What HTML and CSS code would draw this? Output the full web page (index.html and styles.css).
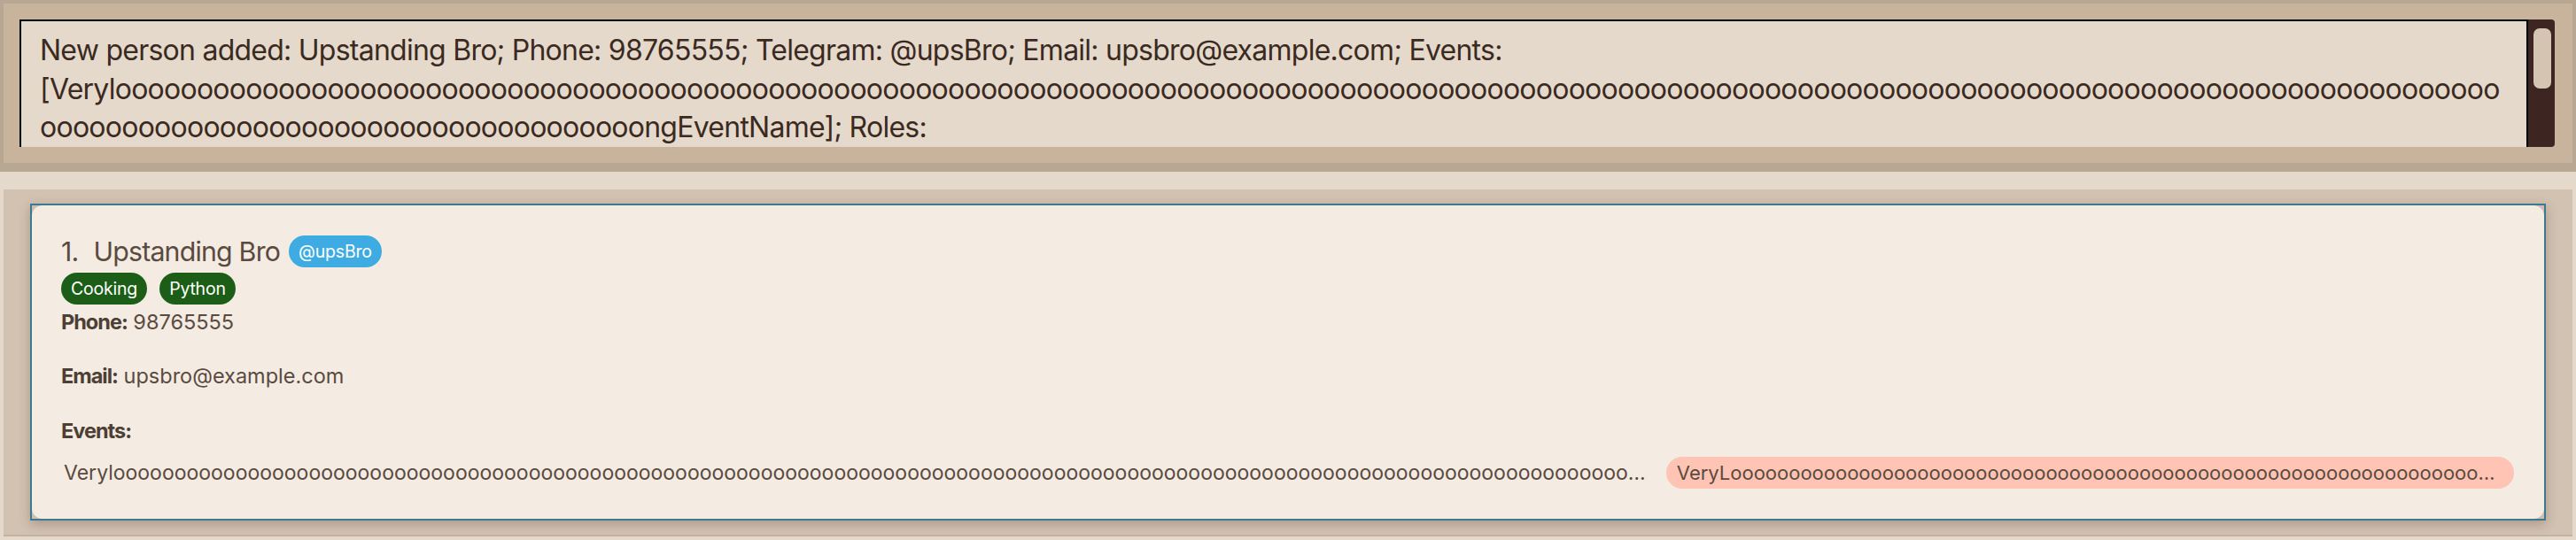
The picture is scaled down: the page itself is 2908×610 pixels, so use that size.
FILE: index.html
```html
<!DOCTYPE html>
<html lang="en">
<head>
<meta charset="utf-8">
<title>Address Book</title>
<link rel="stylesheet" href="styles.css">
</head>
<body>
<div class="app">
  <div class="result-panel">
    <div class="result-inner">
      <div class="result-box">
        <div class="result-text">New person added: Upstanding Bro; Phone: 98765555; Telegram: @upsBro; Email: upsbro@example.com; Events: [VerylooooooooooooooooooooooooooooooooooooooooooooooooooooooooooooooooooooooooooooooooooooooooooooooooooooooooooooooooooooooooooooooooooooooooooooooooooooooooooooooooooooooooooooooooooooooongEventName]; Roles:</div>
      </div>
      <div class="scrollbar"><div class="thumb"></div></div>
    </div>
  </div>
  <div class="list-wrap">
    <div class="list-panel">
      <div class="card">
        <div class="card-body">
          <div class="name-row">
            <span class="idx">1.</span>
            <span class="name">Upstanding Bro</span>
            <span class="tg">@upsBro</span>
          </div>
          <div class="tags">
            <span class="tag">Cooking</span>
            <span class="tag">Python</span>
          </div>
          <div class="field phone"><span class="lbl">Phone:</span> 98765555</div>
          <div class="field email"><span class="lbl">Email:</span> upsbro@example.com</div>
          <div class="field events-label"><span class="lbl">Events:</span></div>
          <div class="events">
            <span class="ev-text">VerylooooooooooooooooooooooooooooooooooooooooooooooooooooooooooooooooooooooooooooooooooooooooooooooooooooooooooooooooooooooooooooooooooooooooooooooooooooooooooooooooooooooooooooooooooooooongEventName</span>
            <span class="ev-chip">VeryLoooooooooooooooooooooooooooooooooooooooooooooooooooooooooooooooooooooooooooooooooooooooooooooooooooooooooooooooooooooooooooooooooooooooooooooooooooooooongRoleName</span>
          </div>
        </div>
      </div>
    </div>
  </div>
</div>
</body>
</html>
```
FILE: styles.css
```css
html, body {
  margin: 0;
  padding: 0;
}
body {
  width: 2908px;
  height: 610px;
  overflow: hidden;
  background: #e5d9cc;
  font-family: Inter, "Noto Sans", sans-serif;
}
.app {
  display: flex;
  flex-direction: column;
}
.result-panel {
  border: 4px solid #b8a792;
  border-bottom-width: 10px;
  background: #c8b49c;
  padding: 18px 20px 18px 18px;
}
.result-inner {
  display: flex;
  height: 144px;
}
.result-box {
  flex: 1;
  min-width: 0;
  border: 2px solid #000;
  border-bottom: none;
  background: #e5d9cc;
  overflow: hidden;
  padding: 11px 22px 0 21px;
}
.result-text {
  font-size: 32px;
  letter-spacing: -0.75px;
  line-height: 43.5px;
  color: #3b2a21;
  overflow-wrap: anywhere;
}
.scrollbar {
  width: 30px;
  box-sizing: border-box;
  background: #3d2622;
  border-radius: 0 4px 4px 0;
  padding: 10px 4px 0 6px;
}
.thumb {
  height: 68px;
  background: #d6c4b3;
  border-radius: 7px;
}
.list-wrap {
  padding: 20px 4px 4px;
}
.list-panel {
  background: #d2c2b2;
  border-bottom: 2px solid #c3b2a1;
  padding: 16px 30px;
}
.card {
  height: 358px;
  box-sizing: border-box;
  border: 2px solid #3d7a91;
  background: #cdbfb1;
  box-shadow: 0 4px 12px rgba(70, 45, 25, 0.28);
}
.card-body {
  height: 100%;
  box-sizing: border-box;
  background: #f4ece3;
  border-radius: 12px;
  padding: 34px 34px 34px 33px;
  color: #5a4a40;
}
.name-row {
  display: flex;
  align-items: center;
  height: 36px;
}
.idx {
  font-size: 30.3px;
  letter-spacing: -0.8px;
  margin-right: 17px;
}
.name {
  font-size: 30.3px;
  letter-spacing: -0.8px;
  margin-right: 10px;
}
.tg {
  height: 36px;
  line-height: 36px;
  padding: 0 11px;
  border-radius: 18px;
  background: #3eabe2;
  color: #fff;
  font-size: 19.5px;
  letter-spacing: -0.2px;
}
.tags {
  display: flex;
  gap: 14px;
  margin-top: 6px;
}
.tag {
  height: 36px;
  line-height: 36px;
  padding: 0 11px;
  border-radius: 18px;
  background: #1c5e17;
  color: #fff;
  font-size: 19.5px;
  letter-spacing: -0.2px;
}
.field {
  font-size: 23.5px;
  line-height: 30px;
  color: #5a4a40;
}
.lbl {
  font-weight: 700;
  color: #4e3f35;
  letter-spacing: -1px;
}
.phone {
  margin-top: 5px;
}
.email {
  margin-top: 31px;
}
.events-label {
  margin-top: 32px;
}
.events {
  display: grid;
  grid-template-columns: 65.27fr 34.73fr;
  gap: 13px;
  align-items: center;
  margin-top: 14px;
}
.ev-text {
  min-width: 0;
  padding-left: 3px;
  font-size: 23px;
  white-space: nowrap;
  overflow: hidden;
  text-overflow: ellipsis;
}
.ev-chip {
  min-width: 0;
  height: 36px;
  line-height: 36px;
  padding: 0 12px;
  border-radius: 18px;
  background: #ffc4b3;
  color: #5a4a40;
  font-size: 22px;
  white-space: nowrap;
  overflow: hidden;
  text-overflow: ellipsis;
}
```
